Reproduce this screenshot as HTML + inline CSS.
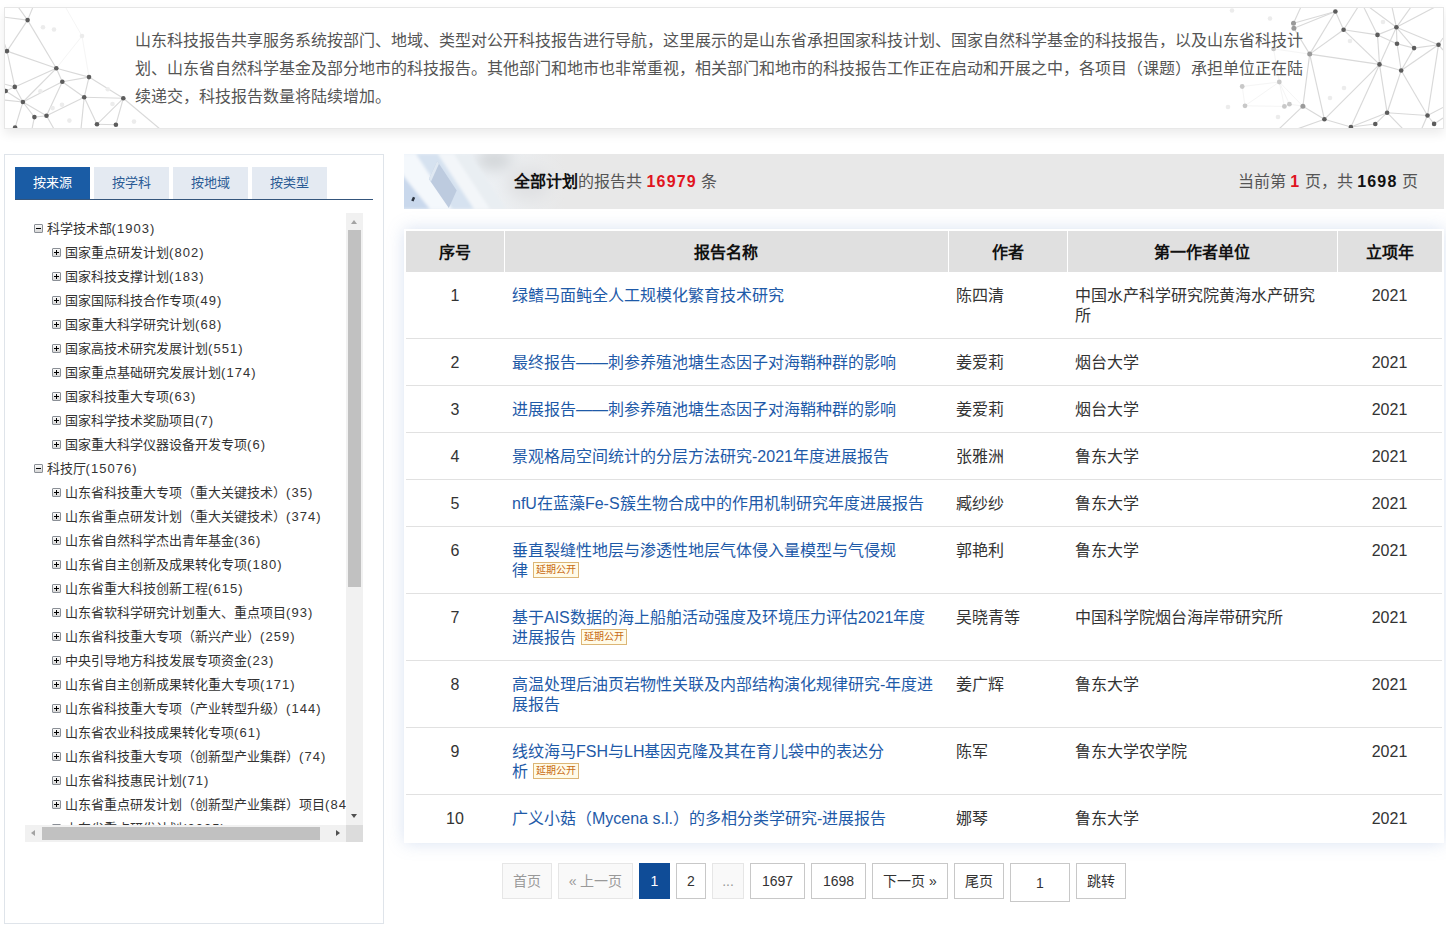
<!DOCTYPE html>
<html lang="zh-CN"><head><meta charset="utf-8"><style>
*{box-sizing:border-box;margin:0;padding:0}
html,body{width:1446px;height:928px;overflow:hidden;background:#fff;font-family:"Liberation Sans",sans-serif;color:#333}
.abs{position:absolute}
#intro{left:4px;top:7px;width:1440px;height:122px;border:1px solid #e6e6e6;border-bottom-color:#e8e8e8;background:#fff;overflow:hidden;box-shadow:0 5px 10px rgba(0,0,0,.08)}
#intro .txt{position:absolute;left:130px;top:19px;width:1172px;font-size:16px;line-height:28px;color:#555}
#left{left:4px;top:154px;width:380px;height:770px;border:1px solid #dfe4ea;background:#fff}
.tab{position:absolute;top:12px;width:75px;height:32px;background:#e4eaf2;color:#2a5b95;font-size:13px;line-height:32px;text-align:center}
.tab.on{background:#1a5ca5;color:#fff}
#tabline{position:absolute;left:10px;top:44px;width:358px;height:1px;background:#34557c}
#tree{position:absolute;left:20px;top:58px;width:321px;height:612px;overflow:hidden}
.ti{position:absolute;height:24px;line-height:24px;font-size:13px;color:#333;white-space:nowrap}
.ti .n{letter-spacing:1.05px}
.ic{position:absolute;top:8px;width:9px;height:9px;border:1px solid #8a8f96;background:linear-gradient(#fafafa,#d8d8d8);border-radius:1px}
.ic:before{content:"";position:absolute;left:1px;top:3px;width:5px;height:1px;background:#000}
.ic.p:after{content:"";position:absolute;left:3px;top:1px;width:1px;height:5px;background:#000}
.vsb{position:absolute;left:341px;top:58px;width:17px;height:612px;background:#f1f1f1}
.hsb{position:absolute;left:20px;top:670px;width:321px;height:17px;background:#f1f1f1}
.corner{position:absolute;left:341px;top:670px;width:17px;height:17px;background:#dcdcdc}

#hdr{left:404px;top:154px;width:1040px;height:55px;background:#e8e8e8;overflow:hidden}
#hdr .l{position:absolute;left:110px;top:0;height:55px;line-height:55px;font-size:16px;color:#555;white-space:nowrap}
#hdr .r{position:absolute;right:26px;top:0;height:55px;line-height:55px;font-size:16px;color:#555;white-space:nowrap}
#hdr b{color:#111}
#hdr .red{color:#e0141e;font-weight:bold}
#tbox{left:404px;top:229px;width:1040px;height:614px;background:#fff;box-shadow:0 0 16px rgba(120,150,210,.28)}
table{position:absolute;left:2px;top:2px;width:1036px;border-collapse:collapse;table-layout:fixed;font-size:16px}
th{height:41px;background:#e0e0e0;color:#111;font-weight:bold;text-align:center;border-left:1px solid #fff;padding:0 0 2px}
th:first-child{border-left:0}
td{padding:14px 8px 12px;line-height:20px;color:#333;vertical-align:top;border-bottom:1px solid #e1e1e1}
td.c{text-align:center}
td a{color:#1e5aa8;text-decoration:none}
tr:last-child td{border-bottom:0}
#hdr .red,#hdr b .n,.bn{letter-spacing:1.2px}
.bd{display:inline-block;vertical-align:top;margin-top:1px;margin-left:5px;height:16px;line-height:14px;padding:0 2px;border:1px solid #dcb676;background:#fffbe8;color:#c86a12;font-size:10px}
.pg{position:absolute;top:863px;height:36px;line-height:34px;border:1px solid #c8c8c8;background:#fff;color:#333;font-size:14px;text-align:center}
.pg.dis{border-color:#e6e6e6;background:#f9f9f9;color:#999}
.pg.on{border-color:#0f4c97;background:#0f4c97;color:#fff}
</style></head><body>
<div id="intro" class="abs">
<svg class="abs" style="left:-5px;top:-8px" width="1446" height="130"><line x1="65.4" y1="7" x2="82" y2="36" stroke="#f5f5f5" stroke-width="1"/><line x1="82" y1="36" x2="89" y2="77.1" stroke="#f5f5f5" stroke-width="1"/><line x1="82" y1="36" x2="56.3" y2="68.3" stroke="#f5f5f5" stroke-width="1"/><line x1="18.2" y1="7" x2="27.6" y2="20.1" stroke="#d9d9d9" stroke-width="1.15"/><line x1="33" y1="7" x2="27.6" y2="20.1" stroke="#d9d9d9" stroke-width="1.15"/><line x1="4" y1="17.1" x2="27.6" y2="20.1" stroke="#d9d9d9" stroke-width="1.15"/><line x1="27.6" y1="20.1" x2="7" y2="51.1" stroke="#d9d9d9" stroke-width="1.15"/><line x1="27.6" y1="20.1" x2="56.3" y2="68.3" stroke="#d9d9d9" stroke-width="1.15"/><line x1="7" y1="51.1" x2="56.3" y2="68.3" stroke="#d9d9d9" stroke-width="1.15"/><line x1="7" y1="51.1" x2="14.8" y2="86.9" stroke="#d9d9d9" stroke-width="1.15"/><line x1="56.3" y1="68.3" x2="89" y2="77.1" stroke="#d9d9d9" stroke-width="1.15"/><line x1="56.3" y1="68.3" x2="62.3" y2="81.8" stroke="#d9d9d9" stroke-width="1.15"/><line x1="56.3" y1="68.3" x2="14.8" y2="86.9" stroke="#d9d9d9" stroke-width="1.15"/><line x1="56.3" y1="68.3" x2="22.9" y2="102" stroke="#d9d9d9" stroke-width="1.15"/><line x1="89" y1="77.1" x2="62.3" y2="81.8" stroke="#d9d9d9" stroke-width="1.15"/><line x1="89" y1="77.1" x2="84.2" y2="97.3" stroke="#d9d9d9" stroke-width="1.15"/><line x1="89" y1="77.1" x2="123.3" y2="98.3" stroke="#d9d9d9" stroke-width="1.15"/><line x1="62.3" y1="81.8" x2="84.2" y2="97.3" stroke="#d9d9d9" stroke-width="1.15"/><line x1="62.3" y1="81.8" x2="22.9" y2="102" stroke="#d9d9d9" stroke-width="1.15"/><line x1="62.3" y1="81.8" x2="46.5" y2="115.8" stroke="#d9d9d9" stroke-width="1.15"/><line x1="14.8" y1="86.9" x2="5.7" y2="91" stroke="#d9d9d9" stroke-width="1.15"/><line x1="14.8" y1="86.9" x2="22.9" y2="102" stroke="#d9d9d9" stroke-width="1.15"/><line x1="5.7" y1="91" x2="22.9" y2="102" stroke="#d9d9d9" stroke-width="1.15"/><line x1="22.9" y1="102" x2="34.4" y2="117.1" stroke="#d9d9d9" stroke-width="1.15"/><line x1="22.9" y1="102" x2="46.5" y2="115.8" stroke="#d9d9d9" stroke-width="1.15"/><line x1="22.9" y1="102" x2="15.1" y2="127.6" stroke="#d9d9d9" stroke-width="1.15"/><line x1="84.2" y1="97.3" x2="46.5" y2="115.8" stroke="#d9d9d9" stroke-width="1.15"/><line x1="84.2" y1="97.3" x2="123.3" y2="98.3" stroke="#d9d9d9" stroke-width="1.15"/><line x1="84.2" y1="97.3" x2="97" y2="124.3" stroke="#d9d9d9" stroke-width="1.15"/><line x1="84.2" y1="97.3" x2="81" y2="129" stroke="#d9d9d9" stroke-width="1.15"/><line x1="123.3" y1="98.3" x2="97" y2="124.3" stroke="#d9d9d9" stroke-width="1.15"/><line x1="123.3" y1="98.3" x2="115.9" y2="124.7" stroke="#d9d9d9" stroke-width="1.15"/><line x1="123.3" y1="98.3" x2="160" y2="129" stroke="#d9d9d9" stroke-width="1.15"/><line x1="97" y1="124.3" x2="115.9" y2="124.7" stroke="#d9d9d9" stroke-width="1.15"/><line x1="34.4" y1="117.1" x2="46.5" y2="115.8" stroke="#d9d9d9" stroke-width="1.15"/><line x1="34.4" y1="117.1" x2="32" y2="129" stroke="#d9d9d9" stroke-width="1.15"/><line x1="46.5" y1="115.8" x2="54" y2="129" stroke="#d9d9d9" stroke-width="1.15"/><line x1="4" y1="84" x2="14.8" y2="86.9" stroke="#d9d9d9" stroke-width="1.15"/><line x1="4" y1="100" x2="22.9" y2="102" stroke="#d9d9d9" stroke-width="1.15"/><line x1="4" y1="42" x2="7" y2="51.1" stroke="#d9d9d9" stroke-width="1.15"/><circle cx="43" cy="27.2" r="2.3" fill="#ececec"/><circle cx="54" cy="29.5" r="2.3" fill="#ececec"/><circle cx="82" cy="36" r="2.3" fill="#ececec"/><circle cx="107.8" cy="89.2" r="2.3" fill="#ececec"/><circle cx="112.5" cy="104" r="2.3" fill="#ececec"/><circle cx="62" cy="104.7" r="2.3" fill="#ececec"/><circle cx="52.6" cy="108.1" r="2.3" fill="#ececec"/><circle cx="40.4" cy="91.3" r="2.3" fill="#ececec"/><circle cx="69.4" cy="120.6" r="2.3" fill="#ececec"/><circle cx="134" cy="121.6" r="2.3" fill="#ececec"/><circle cx="27.6" cy="20.1" r="2.3" fill="#5c5c5c"/><circle cx="7" cy="51.1" r="2.3" fill="#5c5c5c"/><circle cx="56.3" cy="68.3" r="2.3" fill="#5c5c5c"/><circle cx="89" cy="77.1" r="2.3" fill="#5c5c5c"/><circle cx="62.3" cy="81.8" r="2.3" fill="#5c5c5c"/><circle cx="14.8" cy="86.9" r="2.3" fill="#5c5c5c"/><circle cx="5.7" cy="91" r="2.3" fill="#5c5c5c"/><circle cx="22.9" cy="102" r="2.3" fill="#5c5c5c"/><circle cx="84.2" cy="97.3" r="2.3" fill="#5c5c5c"/><circle cx="123.3" cy="98.3" r="2.3" fill="#5c5c5c"/><circle cx="34.4" cy="117.1" r="2.3" fill="#5c5c5c"/><circle cx="46.5" cy="115.8" r="2.3" fill="#5c5c5c"/><circle cx="97" cy="124.3" r="2.3" fill="#5c5c5c"/><circle cx="115.9" cy="124.7" r="2.3" fill="#5c5c5c"/><circle cx="15.1" cy="127.6" r="2.3" fill="#5c5c5c"/><line x1="1309.7" y1="54.1" x2="1273.6" y2="48.9" stroke="#f5f5f5" stroke-width="1"/><line x1="1273.6" y1="48.9" x2="1279.3" y2="82" stroke="#f5f5f5" stroke-width="1"/><line x1="1279.3" y1="82" x2="1242.2" y2="86.5" stroke="#f5f5f5" stroke-width="1"/><line x1="1279.3" y1="82" x2="1245" y2="105.8" stroke="#f5f5f5" stroke-width="1"/><line x1="1279.3" y1="82" x2="1284.4" y2="106.4" stroke="#f5f5f5" stroke-width="1"/><line x1="1279.3" y1="82" x2="1289.4" y2="104.2" stroke="#f5f5f5" stroke-width="1"/><line x1="1279.3" y1="82" x2="1302.9" y2="106.2" stroke="#f5f5f5" stroke-width="1"/><line x1="1242.2" y1="86.5" x2="1245" y2="105.8" stroke="#f5f5f5" stroke-width="1"/><line x1="1245" y1="105.8" x2="1284.4" y2="106.4" stroke="#f5f5f5" stroke-width="1"/><line x1="1284.4" y1="106.4" x2="1289.4" y2="104.2" stroke="#f5f5f5" stroke-width="1"/><line x1="1289.4" y1="104.2" x2="1302.9" y2="106.2" stroke="#f5f5f5" stroke-width="1"/><line x1="1293.5" y1="23.2" x2="1335.4" y2="11.5" stroke="#d9d9d9" stroke-width="1.15"/><line x1="1293.9" y1="28.2" x2="1335.4" y2="11.5" stroke="#d9d9d9" stroke-width="1.15"/><line x1="1293.5" y1="23.2" x2="1300.9" y2="7" stroke="#d9d9d9" stroke-width="1.15"/><line x1="1293.9" y1="28.2" x2="1309.7" y2="54.1" stroke="#d9d9d9" stroke-width="1.15"/><line x1="1335.4" y1="11.5" x2="1309.7" y2="54.1" stroke="#d9d9d9" stroke-width="1.15"/><line x1="1335.4" y1="11.5" x2="1343.6" y2="29.8" stroke="#d9d9d9" stroke-width="1.15"/><line x1="1343.6" y1="29.8" x2="1358" y2="7" stroke="#d9d9d9" stroke-width="1.15"/><line x1="1377.5" y1="34.9" x2="1363.7" y2="7" stroke="#d9d9d9" stroke-width="1.15"/><line x1="1396.4" y1="27.3" x2="1369" y2="7" stroke="#d9d9d9" stroke-width="1.15"/><line x1="1396.4" y1="27.3" x2="1392" y2="7" stroke="#d9d9d9" stroke-width="1.15"/><line x1="1396.4" y1="27.3" x2="1411" y2="7" stroke="#d9d9d9" stroke-width="1.15"/><line x1="1396.4" y1="27.3" x2="1435" y2="7" stroke="#d9d9d9" stroke-width="1.15"/><line x1="1343.6" y1="29.8" x2="1377.5" y2="34.9" stroke="#d9d9d9" stroke-width="1.15"/><line x1="1343.6" y1="29.8" x2="1379.5" y2="64.4" stroke="#d9d9d9" stroke-width="1.15"/><line x1="1343.6" y1="29.8" x2="1309.7" y2="54.1" stroke="#d9d9d9" stroke-width="1.15"/><line x1="1377.5" y1="34.9" x2="1396.4" y2="27.3" stroke="#d9d9d9" stroke-width="1.15"/><line x1="1377.5" y1="34.9" x2="1379.5" y2="64.4" stroke="#d9d9d9" stroke-width="1.15"/><line x1="1377.5" y1="34.9" x2="1397" y2="43.7" stroke="#d9d9d9" stroke-width="1.15"/><line x1="1396.4" y1="27.3" x2="1397" y2="43.7" stroke="#d9d9d9" stroke-width="1.15"/><line x1="1396.4" y1="27.3" x2="1414.1" y2="48.1" stroke="#d9d9d9" stroke-width="1.15"/><line x1="1396.4" y1="27.3" x2="1438.5" y2="44.8" stroke="#d9d9d9" stroke-width="1.15"/><line x1="1396.4" y1="27.3" x2="1379.5" y2="64.4" stroke="#d9d9d9" stroke-width="1.15"/><line x1="1397" y1="43.7" x2="1414.1" y2="48.1" stroke="#d9d9d9" stroke-width="1.15"/><line x1="1397" y1="43.7" x2="1401.2" y2="70.5" stroke="#d9d9d9" stroke-width="1.15"/><line x1="1414.1" y1="48.1" x2="1438.5" y2="44.8" stroke="#d9d9d9" stroke-width="1.15"/><line x1="1414.1" y1="48.1" x2="1401.2" y2="70.5" stroke="#d9d9d9" stroke-width="1.15"/><line x1="1438.5" y1="44.8" x2="1401.2" y2="70.5" stroke="#d9d9d9" stroke-width="1.15"/><line x1="1438.5" y1="44.8" x2="1427.5" y2="115.5" stroke="#d9d9d9" stroke-width="1.15"/><line x1="1438.5" y1="44.8" x2="1443" y2="38" stroke="#d9d9d9" stroke-width="1.15"/><line x1="1438.5" y1="44.8" x2="1443" y2="50" stroke="#d9d9d9" stroke-width="1.15"/><line x1="1379.5" y1="64.4" x2="1401.2" y2="70.5" stroke="#d9d9d9" stroke-width="1.15"/><line x1="1309.7" y1="54.1" x2="1379.5" y2="64.4" stroke="#d9d9d9" stroke-width="1.15"/><line x1="1379.5" y1="64.4" x2="1387.1" y2="112.7" stroke="#d9d9d9" stroke-width="1.15"/><line x1="1379.5" y1="64.4" x2="1324.4" y2="119.3" stroke="#d9d9d9" stroke-width="1.15"/><line x1="1379.5" y1="64.4" x2="1350.9" y2="127" stroke="#d9d9d9" stroke-width="1.15"/><line x1="1401.2" y1="70.5" x2="1387.1" y2="112.7" stroke="#d9d9d9" stroke-width="1.15"/><line x1="1401.2" y1="70.5" x2="1427.5" y2="115.5" stroke="#d9d9d9" stroke-width="1.15"/><line x1="1387.1" y1="112.7" x2="1427.5" y2="115.5" stroke="#d9d9d9" stroke-width="1.15"/><line x1="1387.1" y1="112.7" x2="1375.3" y2="124" stroke="#d9d9d9" stroke-width="1.15"/><line x1="1387.1" y1="112.7" x2="1403" y2="129" stroke="#d9d9d9" stroke-width="1.15"/><line x1="1387.1" y1="112.7" x2="1350.9" y2="127" stroke="#d9d9d9" stroke-width="1.15"/><line x1="1427.5" y1="115.5" x2="1434.1" y2="123.9" stroke="#d9d9d9" stroke-width="1.15"/><line x1="1427.5" y1="115.5" x2="1421.6" y2="129" stroke="#d9d9d9" stroke-width="1.15"/><line x1="1427.5" y1="115.5" x2="1443" y2="107.4" stroke="#d9d9d9" stroke-width="1.15"/><line x1="1434.1" y1="123.9" x2="1443" y2="118" stroke="#d9d9d9" stroke-width="1.15"/><line x1="1375.3" y1="124" x2="1350.9" y2="127" stroke="#d9d9d9" stroke-width="1.15"/><line x1="1309.7" y1="54.1" x2="1324.4" y2="119.3" stroke="#d9d9d9" stroke-width="1.15"/><line x1="1309.7" y1="54.1" x2="1302.9" y2="106.2" stroke="#d9d9d9" stroke-width="1.15"/><line x1="1302.9" y1="106.2" x2="1324.4" y2="119.3" stroke="#d9d9d9" stroke-width="1.15"/><line x1="1302.9" y1="106.2" x2="1279" y2="129" stroke="#d9d9d9" stroke-width="1.15"/><line x1="1324.4" y1="119.3" x2="1297" y2="129" stroke="#d9d9d9" stroke-width="1.15"/><line x1="1324.4" y1="119.3" x2="1350.9" y2="127" stroke="#d9d9d9" stroke-width="1.15"/><circle cx="1270" cy="18.5" r="2.3" fill="#ececec"/><circle cx="1232" cy="10.5" r="2.3" fill="#ececec"/><circle cx="1228" cy="107" r="2.3" fill="#ececec"/><circle cx="1278" cy="117" r="2.3" fill="#ececec"/><circle cx="1330" cy="98" r="2.3" fill="#ececec"/><circle cx="1344" cy="88" r="2.3" fill="#ececec"/><circle cx="1350" cy="41" r="2.3" fill="#ececec"/><circle cx="1383" cy="22" r="2.3" fill="#ececec"/><circle cx="1273.6" cy="48.9" r="2.4" fill="#c8c8c8"/><circle cx="1279.3" cy="82" r="2.4" fill="#c8c8c8"/><circle cx="1242.2" cy="86.5" r="2.4" fill="#c8c8c8"/><circle cx="1245" cy="105.8" r="2.4" fill="#c8c8c8"/><circle cx="1284.4" cy="106.4" r="2.4" fill="#c8c8c8"/><circle cx="1289.4" cy="104.2" r="2.4" fill="#c8c8c8"/><circle cx="1293.5" cy="23.2" r="2.5" fill="#9a9a9a"/><circle cx="1293.9" cy="28.2" r="2.5" fill="#9a9a9a"/><circle cx="1309.7" cy="54.1" r="2.5" fill="#9a9a9a"/><circle cx="1302.9" cy="106.2" r="2.5" fill="#9a9a9a"/><circle cx="1335.4" cy="11.5" r="2.3" fill="#5c5c5c"/><circle cx="1343.6" cy="29.8" r="2.3" fill="#5c5c5c"/><circle cx="1396.4" cy="27.3" r="2.3" fill="#5c5c5c"/><circle cx="1377.5" cy="34.9" r="2.3" fill="#5c5c5c"/><circle cx="1397" cy="43.7" r="2.3" fill="#5c5c5c"/><circle cx="1414.1" cy="48.1" r="2.3" fill="#5c5c5c"/><circle cx="1438.5" cy="44.8" r="2.3" fill="#5c5c5c"/><circle cx="1379.5" cy="64.4" r="2.3" fill="#5c5c5c"/><circle cx="1401.2" cy="70.5" r="2.3" fill="#5c5c5c"/><circle cx="1324.4" cy="119.3" r="2.3" fill="#5c5c5c"/><circle cx="1387.1" cy="112.7" r="2.3" fill="#5c5c5c"/><circle cx="1427.5" cy="115.5" r="2.3" fill="#5c5c5c"/><circle cx="1375.3" cy="124" r="2.3" fill="#5c5c5c"/><circle cx="1434.1" cy="123.9" r="2.3" fill="#5c5c5c"/><circle cx="1350.9" cy="127" r="2.3" fill="#5c5c5c"/></svg>
<div class="txt">山东科技报告共享服务系统按部门、地域、类型对公开科技报告进行导航，这里展示的是山东省承担国家科技计划、国家自然科学基金的科技报告，以及山东省科技计划、山东省自然科学基金及部分地市的科技报告。其他部门和地市也非常重视，相关部门和地市的科技报告工作正在启动和开展之中，各项目（课题）承担单位正在陆续递交，科技报告数量将陆续增加。</div>
</div>

<div id="left" class="abs">
<div class="tab on" style="left:10px">按来源</div>
<div class="tab" style="left:89px">按学科</div>
<div class="tab" style="left:168px">按地域</div>
<div class="tab" style="left:247px">按类型</div>
<div id="tabline"></div>
<div id="tree">
<div class="ic" style="left:9px;top:11px"></div>
<div class="ti" style="left:21.5px;top:4px">科学技术部<span class="n">(1903)</span></div>
<div class="ic p" style="left:27px;top:35px"></div>
<div class="ti" style="left:40px;top:28px">国家重点研发计划<span class="n">(802)</span></div>
<div class="ic p" style="left:27px;top:59px"></div>
<div class="ti" style="left:40px;top:52px">国家科技支撑计划<span class="n">(183)</span></div>
<div class="ic p" style="left:27px;top:83px"></div>
<div class="ti" style="left:40px;top:76px">国家国际科技合作专项<span class="n">(49)</span></div>
<div class="ic p" style="left:27px;top:107px"></div>
<div class="ti" style="left:40px;top:100px">国家重大科学研究计划<span class="n">(68)</span></div>
<div class="ic p" style="left:27px;top:131px"></div>
<div class="ti" style="left:40px;top:124px">国家高技术研究发展计划<span class="n">(551)</span></div>
<div class="ic p" style="left:27px;top:155px"></div>
<div class="ti" style="left:40px;top:148px">国家重点基础研究发展计划<span class="n">(174)</span></div>
<div class="ic p" style="left:27px;top:179px"></div>
<div class="ti" style="left:40px;top:172px">国家科技重大专项<span class="n">(63)</span></div>
<div class="ic p" style="left:27px;top:203px"></div>
<div class="ti" style="left:40px;top:196px">国家科学技术奖励项目<span class="n">(7)</span></div>
<div class="ic p" style="left:27px;top:227px"></div>
<div class="ti" style="left:40px;top:220px">国家重大科学仪器设备开发专项<span class="n">(6)</span></div>
<div class="ic" style="left:9px;top:251px"></div>
<div class="ti" style="left:21.5px;top:244px">科技厅<span class="n">(15076)</span></div>
<div class="ic p" style="left:27px;top:275px"></div>
<div class="ti" style="left:40px;top:268px">山东省科技重大专项（重大关键技术）<span class="n">(35)</span></div>
<div class="ic p" style="left:27px;top:299px"></div>
<div class="ti" style="left:40px;top:292px">山东省重点研发计划（重大关键技术）<span class="n">(374)</span></div>
<div class="ic p" style="left:27px;top:323px"></div>
<div class="ti" style="left:40px;top:316px">山东省自然科学杰出青年基金<span class="n">(36)</span></div>
<div class="ic p" style="left:27px;top:347px"></div>
<div class="ti" style="left:40px;top:340px">山东省自主创新及成果转化专项<span class="n">(180)</span></div>
<div class="ic p" style="left:27px;top:371px"></div>
<div class="ti" style="left:40px;top:364px">山东省重大科技创新工程<span class="n">(615)</span></div>
<div class="ic p" style="left:27px;top:395px"></div>
<div class="ti" style="left:40px;top:388px">山东省软科学研究计划重大、重点项目<span class="n">(93)</span></div>
<div class="ic p" style="left:27px;top:419px"></div>
<div class="ti" style="left:40px;top:412px">山东省科技重大专项（新兴产业）<span class="n">(259)</span></div>
<div class="ic p" style="left:27px;top:443px"></div>
<div class="ti" style="left:40px;top:436px">中央引导地方科技发展专项资金<span class="n">(23)</span></div>
<div class="ic p" style="left:27px;top:467px"></div>
<div class="ti" style="left:40px;top:460px">山东省自主创新成果转化重大专项<span class="n">(171)</span></div>
<div class="ic p" style="left:27px;top:491px"></div>
<div class="ti" style="left:40px;top:484px">山东省科技重大专项（产业转型升级）<span class="n">(144)</span></div>
<div class="ic p" style="left:27px;top:515px"></div>
<div class="ti" style="left:40px;top:508px">山东省农业科技成果转化专项<span class="n">(61)</span></div>
<div class="ic p" style="left:27px;top:539px"></div>
<div class="ti" style="left:40px;top:532px">山东省科技重大专项（创新型产业集群）<span class="n">(74)</span></div>
<div class="ic p" style="left:27px;top:563px"></div>
<div class="ti" style="left:40px;top:556px">山东省科技惠民计划<span class="n">(71)</span></div>
<div class="ic p" style="left:27px;top:587px"></div>
<div class="ti" style="left:40px;top:580px">山东省重点研发计划（创新型产业集群）项目<span class="n">(84)</span></div>
<div class="ic p" style="left:27px;top:611px"></div>
<div class="ti" style="left:40px;top:604px">山东省重点研发计划<span class="n">(2035)</span></div>
</div>
<div class="vsb"></div>
<div class="hsb"></div>
<div class="corner"></div>
<div class="abs" style="left:343px;top:75px;width:13px;height:357px;background:#c1c1c1"></div>
<div class="abs" style="left:37px;top:672px;width:278px;height:13px;background:#c1c1c1"></div>
<div class="abs" style="left:346px;top:65px;width:0;height:0;border-left:3.5px solid transparent;border-right:3.5px solid transparent;border-bottom:4px solid #a3a3a3"></div>
<div class="abs" style="left:346px;top:659px;width:0;height:0;border-left:3.5px solid transparent;border-right:3.5px solid transparent;border-top:4px solid #505050"></div>
<div class="abs" style="left:26px;top:675px;width:0;height:0;border-top:3.5px solid transparent;border-bottom:3.5px solid transparent;border-right:4px solid #a3a3a3"></div>
<div class="abs" style="left:331px;top:675px;width:0;height:0;border-top:3.5px solid transparent;border-bottom:3.5px solid transparent;border-left:4px solid #505050"></div>
</div>

<div id="hdr" class="abs"><svg class="abs" style="left:0;top:0" width="160" height="55"><defs><linearGradient id="kg" x1="0" x2="1" y1="0" y2="0"><stop offset="0" stop-color="#eaf1f9"/><stop offset="0.45" stop-color="#edf1f5"/><stop offset="1" stop-color="#e8e8e8"/></linearGradient>
<filter id="bl" x="-20%" y="-20%" width="140%" height="140%"><feGaussianBlur stdDeviation="1.5"/></filter><filter id="bl2" x="-50%" y="-50%" width="200%" height="200%"><feGaussianBlur stdDeviation="7"/></filter></defs>
<rect width="160" height="55" fill="url(#kg)"/>
<g filter="url(#bl2)"><ellipse cx="90" cy="6" rx="18" ry="10" fill="#d2d5d8"/><ellipse cx="125" cy="30" rx="22" ry="16" fill="#e0e1e3"/></g>
<g filter="url(#bl)">
<polygon points="-14,0 12,0 48,55 22,55" fill="#f4f8fc"/>
<polygon points="12,0 34,0 70,55 48,55" fill="#d6e2f0"/>
<polygon points="34,0 50,0 86,55 70,55" fill="#f3f6f9"/>
<polygon points="50,0 66,0 102,55 86,55" fill="#e9eef2"/>
<polygon points="-10,18 -4,18 26,55 -10,55" fill="#c9d8ec"/>
</g>
<polygon points="24.9,24.9 33.2,7.1 52.7,36.5 44.8,54" fill="#bdcbdf"/>
<polygon points="24.9,24.9 33.2,7.1 35,9.8 27,27.5" fill="#dfe8f2"/>
<rect x="8" y="43" width="2.5" height="4" fill="#2c3440" transform="rotate(25 9 45)"/>
</svg>
<div class="l"><b>全部计划</b>的报告共 <span class="red">16979</span> 条</div>
<div class="r">当前第 <span class="red">1</span> 页，共 <b class="bn">1698</b> 页</div>
</div>

<div id="tbox" class="abs">
<table>
<colgroup><col style="width:98px"><col style="width:444px"><col style="width:119px"><col style="width:270px"><col style="width:105px"></colgroup>
<tr><th>序号</th><th>报告名称</th><th>作者</th><th>第一作者单位</th><th>立项年</th></tr>
<tr><td class="c">1</td><td><a>绿鳍马面鲀全人工规模化繁育技术研究</a></td><td>陈四清</td><td>中国水产科学研究院黄海水产研究<br>所</td><td class="c">2021</td></tr>
<tr><td class="c">2</td><td><a>最终报告——刺参养殖池塘生态因子对海鞘种群的影响</a></td><td>姜爱莉</td><td>烟台大学</td><td class="c">2021</td></tr>
<tr><td class="c">3</td><td><a>进展报告——刺参养殖池塘生态因子对海鞘种群的影响</a></td><td>姜爱莉</td><td>烟台大学</td><td class="c">2021</td></tr>
<tr><td class="c">4</td><td><a>景观格局空间统计的分层方法研究-2021年度进展报告</a></td><td>张雅洲</td><td>鲁东大学</td><td class="c">2021</td></tr>
<tr><td class="c">5</td><td><a>nfU在蓝藻Fe-S簇生物合成中的作用机制研究年度进展报告</a></td><td>臧纱纱</td><td>鲁东大学</td><td class="c">2021</td></tr>
<tr><td class="c">6</td><td><a>垂直裂缝性地层与渗透性地层气体侵入量模型与气侵规<br>律</a><span class="bd">延期公开</span></td><td>郭艳利</td><td>鲁东大学</td><td class="c">2021</td></tr>
<tr><td class="c">7</td><td><a>基于AIS数据的海上船舶活动强度及环境压力评估2021年度<br>进展报告</a><span class="bd">延期公开</span></td><td>吴晓青等</td><td>中国科学院烟台海岸带研究所</td><td class="c">2021</td></tr>
<tr><td class="c">8</td><td><a>高温处理后油页岩物性关联及内部结构演化规律研究-年度进<br>展报告</a></td><td>姜广辉</td><td>鲁东大学</td><td class="c">2021</td></tr>
<tr><td class="c">9</td><td><a>线纹海马FSH与LH基因克隆及其在育儿袋中的表达分<br>析</a><span class="bd">延期公开</span></td><td>陈军</td><td>鲁东大学农学院</td><td class="c">2021</td></tr>
<tr><td class="c">10</td><td><a>广义小菇（Mycena s.l.）的多相分类学研究-进展报告</a></td><td>娜琴</td><td>鲁东大学</td><td class="c">2021</td></tr>
</table>
</div>
<div class="pg dis" style="left:502px;width:50px">首页</div>
<div class="pg dis" style="left:558px;width:75px">« 上一页</div>
<div class="pg on" style="left:639px;width:31px">1</div>
<div class="pg " style="left:676px;width:30px">2</div>
<div class="pg dis" style="left:712px;width:32px">...</div>
<div class="pg " style="left:750px;width:55px">1697</div>
<div class="pg " style="left:811px;width:55px">1698</div>
<div class="pg " style="left:872px;width:76px">下一页 »</div>
<div class="pg " style="left:954px;width:50px">尾页</div>
<div class="pg inp" style="left:1010px;width:60px;height:39px;line-height:39px">1</div>
<div class="pg " style="left:1076px;width:50px">跳转</div>
</body></html>
